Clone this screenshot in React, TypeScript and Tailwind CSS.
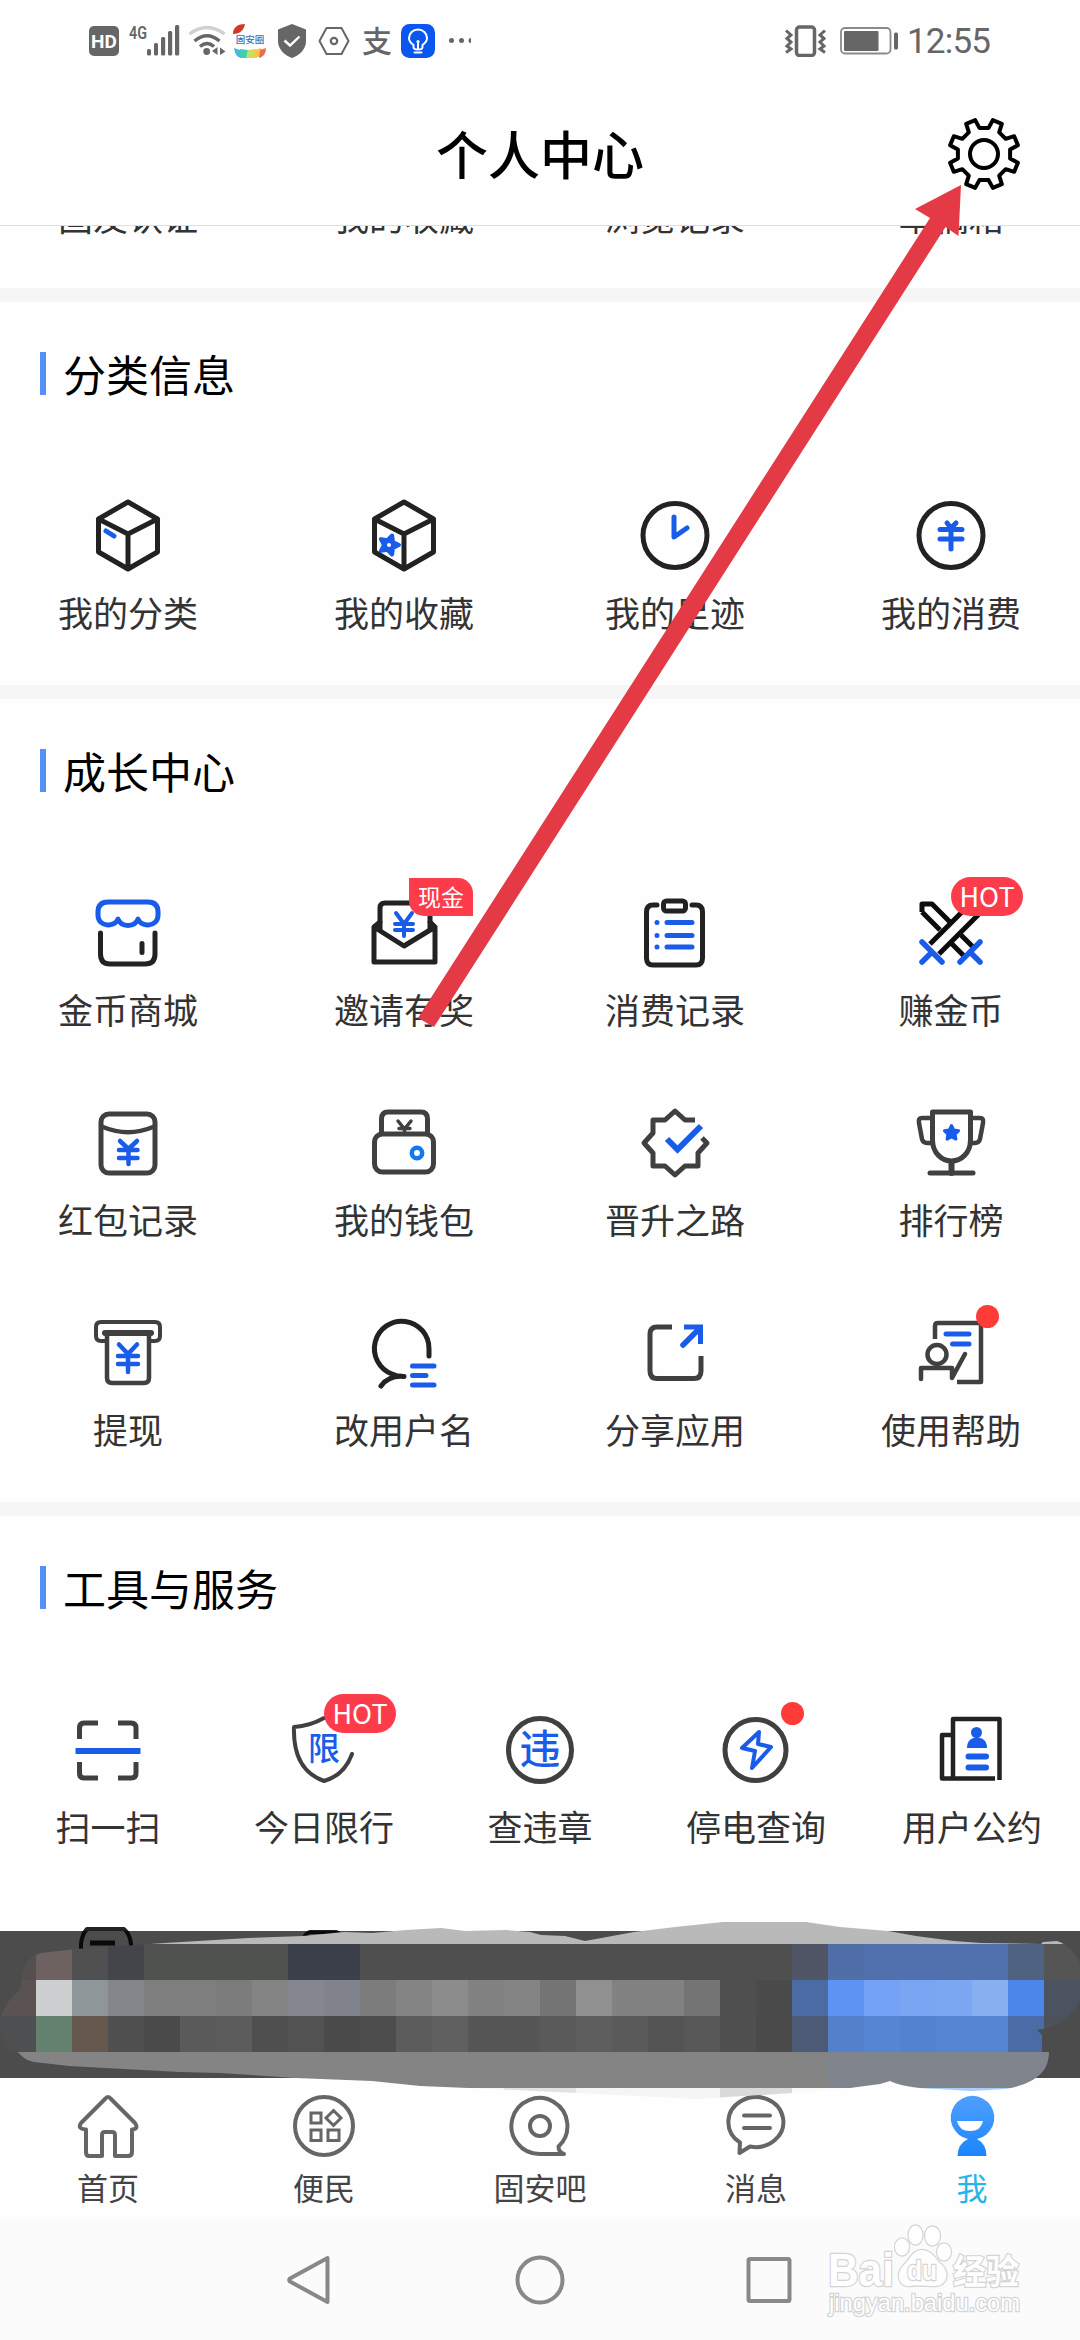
import type { ReactNode } from "react";

const INK = "#222222";
const GRAY = "#404040";
const BLUE = "#1a5cea";
const STATUS = "#666666";

type Item = {
    label: string;
    icon: ReactNode;
    badge?: "hot" | "cash" | "dot";
};

/* Every icon is drawn around its own centre */
function Icon({ color = INK, width = 5, children }: { color?: string; width?: number; children: ReactNode }) {
    return (
        <svg
            viewBox="-40 -40 80 80"
            className="block h-20 w-20 overflow-visible"
            fill="none"
            stroke={color}
            strokeWidth={width}
            strokeLinecap="round"
            strokeLinejoin="round"
        >
            {children}
        </svg>
    );
}

function star(cx: number, cy: number, r: number, turn: number) {
    return Array.from({ length: 10 }, (_, i) => {
        const a = ((turn + i * 36) * Math.PI) / 180;
        const len = i % 2 ? r * 0.5 : r;
        return `${(cx + len * Math.cos(a)).toFixed(1)},${(cy + len * Math.sin(a)).toFixed(1)}`;
    }).join(" ");
}

const gearPoints = Array.from({ length: 8 }, (_, k) =>
    [
        [-10, 26.5],
        [10, 26.5],
        [14.5, 35],
        [30.5, 35],
    ].map(([deg, r]) => {
        const a = ((k * 45 + deg) * Math.PI) / 180;
        return `${(r * Math.sin(a)).toFixed(1)},${(-r * Math.cos(a)).toFixed(1)}`;
    })
)
    .flat()
    .join(" ");

const cube = <path d="M0 -34L29.5 -17V16L0 33L-29.5 16V-17ZM-29.5 -17L0 -2L29.5 -17M0 -2V33" />;

const infoItems: Item[] = [
    {
        label: "我的分类",
        icon: (
            <Icon>
                {cube}
                <path d="M-22 -5L-14 0" stroke={BLUE} />
            </Icon>
        ),
    },
    {
        label: "我的收藏",
        icon: (
            <Icon>
                {cube}
                <polygon points={star(-15, 9, 10, 0)} fill={BLUE} stroke={BLUE} strokeWidth={4} />
                <circle cx={-15} cy={9} r={2} fill="#fff" stroke="none" />
            </Icon>
        ),
    },
    {
        label: "我的足迹",
        icon: (
            <Icon>
                <circle r={32} cy={-0.5} />
                <path d="M-1 -19V1L12 -8" stroke={BLUE} />
            </Icon>
        ),
    },
    {
        label: "我的消费",
        icon: (
            <Icon>
                <circle r={32} cy={-0.5} />
                <path d="M-4 -13L0 -8L5 -13M-11 -6.5H11M-11 3H11M0 -8V13" stroke={BLUE} />
            </Icon>
        ),
    },
];

const growItems: Item[] = [
    {
        label: "金币商城",
        icon: (
            <Icon>
                <path
                    d="M-10 -14C-13 -5.5 -30 -5.5 -30 -18V-21Q-30 -31 -20 -31H20Q30 -31 30 -21V-18C30 -5.5 13 -5.5 10 -14C7 -5.5 -7 -5.5 -10 -14Z"
                    stroke={BLUE}
                />
                <path d="M-27.5 0V21Q-27.5 31 -18 31H17Q27 31 27 21V0M14 10.5V19.5" />
            </Icon>
        ),
    },
    {
        label: "邀请有奖",
        badge: "cash",
        icon: (
            <Icon>
                <path d="M-30 -6V29H31V-6L0 13ZM-30 -6L-24 -11M31 -6L26 -11" />
                <path d="M-24 -4V-25Q-24 -30 -19 -30H21Q26 -30 26 -25V-4" />
                <path d="M-8 -20L0 -9L8 -20M-9 -9H9M-9 -3H9M0 -9V3" stroke={BLUE} strokeWidth={4} />
            </Icon>
        ),
    },
    {
        label: "消费记录",
        icon: (
            <Icon>
                <path
                    d="M-18 -28H-22Q-28.5 -28 -28.5 -21V25Q-28.5 32 -22 32H21Q27.5 32 27.5 25V-21Q27.5 -28 21 -28H17"
                />
                <rect x={-11.5} y={-32} width={22} height={10} rx={3} />
                <path d="M-18 -10.5H-18M-18 2.5H-18M-18 14H-18M-8 -10.5H17M-8 2.5H17M-8 14H17" stroke={BLUE} />
            </Icon>
        ),
    },
    {
        label: "赚金币",
        badge: "hot",
        icon: (
            <Icon color="#0c0c0c">
                <path d="M-29 -21V-29H-19L-1 -11M-29 -21L-11 -3M10 2L23 15M0 10L13 23" strokeLinecap="butt" />
                <path d="M-21 11L19 -29H29V-20L-12 21" strokeLinecap="butt" />
                <path d="M-29 9L-9 29M-29 29L-19 19M29 9L9 29M29 29L19 19" stroke={BLUE} strokeWidth={5.5} />
            </Icon>
        ),
    },
    {
        label: "红包记录",
        icon: (
            <Icon color={GRAY}>
                <rect x={-27} y={-29} width={54} height={59} rx={8} />
                <path d="M-25 -16Q0 -5.5 25 -16" strokeWidth={4.5} />
                <path d="M-8 -2L0.5 6L9 -2M-9 7H9.5M-9 15H9.5M0.5 6V21" stroke={BLUE} strokeWidth={4.5} />
            </Icon>
        ),
    },
    {
        label: "我的钱包",
        icon: (
            <Icon color={GRAY}>
                <rect x={-29.5} y={-9} width={59} height={38} rx={8} />
                <path d="M-22.5 -10V-24Q-22.5 -31 -16 -31H17Q23.5 -31 23.5 -24V-10" />
                <path d="M-6 -22L0.5 -14L7 -22M-5 -14.5H6M0.5 -14V-10" strokeWidth={3.5} />
                <circle cx={13} cy={10} r={5.2} stroke="#1378ec" strokeWidth={4.5} />
            </Icon>
        ),
    },
    {
        label: "晋升之路",
        icon: (
            <Icon color={GRAY}>
                <path
                    d="M20 -23H10L0 -32L-10 -23H-22V-10L-31 0L-22 10V23H-10L0 32L10 23H23V10L32 0L27 -5"
                    strokeLinecap="butt"
                />
                <path d="M-8 -4L2.5 6.5L26 -17" stroke={BLUE} strokeWidth={6} strokeLinecap="butt" strokeLinejoin="miter" />
            </Icon>
        ),
    },
    {
        label: "排行榜",
        icon: (
            <Icon color={GRAY}>
                <path d="M-18.5 -31H19.5V-3C19.5 10 10 18 0.5 18C-9 18 -18.5 10 -18.5 -3Z" />
                <path d="M-19 -25H-29Q-33 -25 -32 -20L-29 -4Q-28 0 -24 0H-18M20 -25H29Q33 -25 32 -20L29 -4Q28 0 24 0H19" strokeWidth={4.5} />
                <path d="M0.5 19V30" strokeWidth={6} />
                <path d="M-21 30H22" />
                <polygon points={star(0.5, -10, 7.5, -90)} fill={BLUE} stroke={BLUE} strokeWidth={3} />
            </Icon>
        ),
    },
    {
        label: "提现",
        icon: (
            <Icon color={GRAY} width={4.5}>
                <path d="M-23 -12H-27Q-32 -12 -32 -17V-26Q-32 -31 -27 -31H27Q32 -31 32 -26V-17Q32 -12 27 -12H23" strokeWidth={4} />
                <path d="M-23 -20H23" strokeWidth={6} />
                <path d="M-21 -18V25Q-21 30 -16 30H16Q21 30 21 25V-18" />
                <path d="M-9 -8.5L0 1L9 -8.5M-10 3H10M-10 11H10M0 1V19" stroke={BLUE} strokeWidth={4.5} />
            </Icon>
        ),
    },
    {
        label: "改用户名",
        icon: (
            <Icon>
                <path d="M25 3V-4A27.3 27.3 0 1 0 -12 21Q-6 24 0 23.5M-23 33Q-15 22 0 23.5" />
                <path d="M8.5 13H30M8.5 22.5H22M8.5 32H30" stroke={BLUE} strokeWidth={5} />
            </Icon>
        ),
    },
    {
        label: "分享应用",
        icon: (
            <Icon color={GRAY}>
                <path d="M-3 -26H-18Q-25 -26 -25 -19V18Q-25 25.5 -18 25.5H19Q26 25.5 26 18V3" strokeLinecap="butt" />
                <path d="M8 -8L25 -25" stroke={BLUE} strokeWidth={5.5} />
                <path d="M9 -26H25.5V-9" stroke={BLUE} strokeLinecap="butt" strokeLinejoin="miter" />
            </Icon>
        ),
    },
    {
        label: "使用帮助",
        badge: "dot",
        icon: (
            <Icon color={GRAY} width={4.5}>
                <path d="M-16 -14V-27Q-16 -30 -13 -30H30V29H6" strokeLinecap="butt" />
                <circle cx={-14} cy={1.5} r={9.5} />
                <path d="M-30 26V15H1V25L14 1" />
                <path d="M-5 -19H18M1.5 -9H18" stroke={BLUE} strokeWidth={5} />
            </Icon>
        ),
    },
];

const toolItems: Item[] = [
    {
        label: "扫一扫",
        icon: (
            <Icon color={GRAY}>
                <path
                    d="M-28.5 -11V-22Q-28.5 -27 -24 -27H-10M10 -27H23Q28 -27 28 -22V-11M-28.5 12V23Q-28.5 28 -24 28H-10M10 28H23Q28 28 28 23V12"
                    strokeLinecap="butt"
                />
                <path d="M-32.5 1H32.5" stroke={BLUE} strokeWidth={6} strokeLinecap="butt" />
            </Icon>
        ),
    },
    {
        label: "今日限行",
        badge: "hot",
        icon: (
            <Icon color={GRAY} width={4}>
                <path d="M28 4C23 18 14 27 0 31C-20 24 -31 6 -30 -23Q-14 -24 0 -32" />
                <text
                    x={0}
                    y={10}
                    textAnchor="middle"
                    fontSize={32}
                    stroke="none"
                    fill={BLUE}
                    className="font-['Noto_Sans_CJK_SC',sans-serif] font-medium"
                >
                    限
                </text>
            </Icon>
        ),
    },
    {
        label: "查违章",
        icon: (
            <Icon color={GRAY}>
                <circle r={31.5} />
                <text
                    x={0}
                    y={14}
                    textAnchor="middle"
                    fontSize={41}
                    stroke="none"
                    fill={BLUE}
                    className="font-['Noto_Sans_CJK_SC',sans-serif] font-medium"
                >
                    违
                </text>
            </Icon>
        ),
    },
    {
        label: "停电查询",
        badge: "dot",
        icon: (
            <Icon color={GRAY}>
                <circle r={30.5} cx={-0.5} />
                <path d="M3 -18L-14 -2L-1 1L-4 18L15 -3L2 -6Z" stroke={BLUE} strokeWidth={4} />
            </Icon>
        ),
    },
    {
        label: "用户公约",
        icon: (
            <Icon width={4.5}>
                <path d="M27.5 30V-31H-19V28M-19 -15H-30V28.5H23" strokeLinecap="butt" />
                <circle cx={4.5} cy={-17.5} r={5.5} fill={BLUE} stroke="none" />
                <path d="M-5 -2C-5 -9 -1 -12.5 5 -12.5S15 -9 15 -2Z" fill={BLUE} stroke="none" />
                <path d="M-3.5 6.5H14M-3.5 17.5H14" stroke={BLUE} strokeWidth={6} />
            </Icon>
        ),
    },
    {
        label: "",
        icon: (
            <Icon width={4}>
                <path d="M-27 0V-16Q-26 -26 -21 -31H16Q22 -26 23 -16V0" />
                <path d="M-18 -17H7" strokeWidth={5} strokeLinecap="butt" />
            </Icon>
        ),
    },
    {
        label: "",
        icon: (
            <Icon width={4}>
                <path d="M-20 -22Q-18 -27 -14 -28H12Q16 -27 18 -22" />
            </Icon>
        ),
    },
];

function Badge({ kind }: { kind: Item["badge"] }) {
    if (kind === "hot") {
        return (
            <span className="absolute -top-4 left-10 flex h-[39px] w-[72px] items-center justify-center rounded-full bg-[#fd3c4b] pb-0.5 text-[27px] leading-none text-white">
                HOT
            </span>
        );
    }
    if (kind === "cash") {
        return (
            <span className="absolute -top-[15px] left-[45px] flex h-[38px] w-16 items-center justify-center rounded-tr-[15px] rounded-bl-[15px] bg-[#fd3c4b] pb-0.5 text-[23px] leading-none text-white">
                现金
            </span>
        );
    }
    if (kind === "dot") {
        return <span className="absolute -top-2 left-[65px] h-[23px] w-[23px] rounded-full bg-[#ff3b37]" />;
    }
    return null;
}

function Cell({ item }: { item: Item }) {
    return (
        <div className="flex h-[138px] w-[200px] flex-col items-center">
            <div className="relative h-20 w-20">
                {item.icon}
                <Badge kind={item.badge} />
            </div>
            <span className="mt-4 text-[35px] leading-[40px] whitespace-nowrap text-[#333]">{item.label}</span>
        </div>
    );
}

function Section({ title, items, wide, className }: { title: string; items: Item[]; wide?: boolean; className: string }) {
    return (
        <section className={`bg-[#fefefe] pt-[50px] ${className}`}>
            <div className="flex h-[43px] items-center pl-10">
                <span className="h-[43px] w-1.5 bg-[#5590f6]" />
                <h2 className="ml-[17px] text-[43px] leading-[43px] text-black">{title}</h2>
            </div>
            <div
                className={
                    wide
                        ? "mt-[101px] grid grid-cols-5 justify-items-center gap-y-[72px]"
                        : "mt-[101px] grid grid-cols-[276px_271px_276px_200px] gap-y-[72px] pl-7"
                }
            >
                {items.map((item, i) => (
                    <Cell key={i} item={item} />
                ))}
            </div>
        </section>
    );
}

function StatusBar() {
    return (
        <div className="flex h-[82px] items-center pr-[89px] pl-[89px] font-[Roboto,sans-serif] text-[#666]">
            <span className="flex h-[30px] w-[30px] items-center justify-center rounded-[5px] bg-[#666] text-[19px] leading-none font-bold text-[#fefefe]">
                HD
            </span>
            <svg viewBox="129 24 52 34" className="ml-2.5 h-[34px] w-[52px] overflow-visible" fill={STATUS}>
                <text x={129} y={38.5} fontSize={18} textLength={18} lengthAdjust="spacingAndGlyphs" fontWeight={600}>
                    4G
                </text>
                <rect x={147} y={49} width={4} height={6.5} rx={1.5} />
                <rect x={154} y={43} width={4} height={12.5} rx={1.5} />
                <rect x={161} y={37} width={4.2} height={18.5} rx={1.5} />
                <rect x={168} y={31} width={4.2} height={24.5} rx={1.5} />
                <rect x={175} y={25} width={4.2} height={30.5} rx={1.5} />
            </svg>
            <svg viewBox="188 24 38 34" className="ml-[7px] h-[34px] w-[38px]" fill="none" stroke={STATUS} strokeWidth={3.4}>
                <path d="M189.5 34Q207 21 224.5 34" stroke="#d0d0d0" />
                <path d="M194.5 41Q207 30.5 219.5 41M200 46.5Q207 40.5 214 46.5" />
                <circle cx={206.7} cy={51.5} r={3.4} fill={STATUS} stroke="none" />
                <path d="M212 51L217.5 47V55ZM220 47.5L225.5 51.5L220 55Z" fill={STATUS} stroke="none" />
            </svg>
            <svg viewBox="232 23 36 36" className="ml-1.5 h-9 w-9 overflow-visible">
                <path d="M233 34C233 27 238 24 245 24C244 30 240 34 233 34Z" fill="#cf3a24" />
                <text x={250} y={43} textAnchor="middle" fontSize={9.5} fontWeight={500} fill="#2f73b5" className="font-['Noto_Sans_CJK_SC',sans-serif]">
                    固安圈
                </text>
                <path d="M234 48L243 51L241 58Q235 57 234 48Z" fill="#4bb7d6" />
                <path d="M240 49L248 50L247 58H240Z" fill="#3fcfb0" />
                <path d="M248 50L256 49L257 58H246Z" fill="#c5df62" />
                <path d="M254 50L261 48L262 57H254Z" fill="#f4c64e" />
                <path d="M260 50L266 48Q266 56 259 58Z" fill="#ee6c4e" />
            </svg>
            <svg viewBox="277 24 30 34" className="ml-[9px] h-[34px] w-[30px]">
                <path d="M292 24L306 29.5V41C306 49 300 55 292 58C284 55 278 49 278 41V29.5Z" fill={STATUS} />
                <path d="M284.5 40.5L290 45.5L299.5 36.5" fill="none" stroke="#fff" strokeWidth={2.4} />
            </svg>
            <svg viewBox="318 25 32 32" className="ml-[11px] h-8 w-8" fill="none" stroke={STATUS} strokeWidth={2}>
                <path d="M326.5 28H341.5L348.5 41L341.5 54H326.5L319.5 41Z" strokeLinejoin="round" />
                <circle cx={334} cy={41} r={3.2} strokeWidth={2.2} />
            </svg>
            <span className="ml-[11px] w-8 pb-1 text-center font-['Noto_Sans_CJK_SC',sans-serif] text-[30px] leading-8 font-medium">支</span>
            <svg viewBox="401 24 34 34" className="ml-2 h-[34px] w-[34px]" fill="none" stroke="#fff" strokeWidth={2} strokeLinecap="round">
                <rect x={401} y={24} width={34} height={34} rx={8.5} fill="#0a57f0" stroke="none" />
                <path d="M413.5 47V45Q409 42 409 38A9 8.5 0 0 1 427 38Q427 42 422.5 45V47Q422.5 49.5 418 49.5T413.5 47ZM414.5 52.5H421.5M418 48V42" />
                <circle cx={418} cy={41.5} r={1.6} fill="#fff" stroke="none" />
            </svg>
            <svg viewBox="448 36 23 10" className="ml-[13px] h-2.5 w-[23px]" fill={STATUS}>
                <circle cx={451.5} cy={40.5} r={2.5} />
                <circle cx={461.5} cy={40.5} r={2.5} />
                <circle cx={471} cy={40.5} r={2.5} />
            </svg>
            <svg viewBox="784 24 42 32" className="ml-auto h-8 w-[42px]" fill="none" stroke={STATUS} strokeWidth={3.5}>
                <rect x={796.5} y={26} width={18} height={28.5} rx={3} />
                <path d="M786 29.5L791 34L787 37.5L791 41L787 45L791 48L786 51.5M825 29.5L820 34L824 37.5L820 41L824 45L820 48L825 51.5" strokeWidth={3} />
            </svg>
            <svg viewBox="840 26 60 30" className="ml-3.5 h-[30px] w-[60px]" fill={STATUS}>
                <rect x={841} y={28} width={49.5} height={25.5} rx={4} fill="none" stroke="#8a8a8a" strokeWidth={1.8} />
                <rect x={844} y={31} width={34.5} height={20} rx={1} />
                <rect x={894} y={32.5} width={4} height={17} rx={1.5} />
            </svg>
            <span className="ml-[7px] w-[84px] text-[35px] leading-none tracking-[-0.8px]">12:55</span>
        </div>
    );
}

const MOSAIC: { y: number; cells: [string, number][] }[] = [
    { y: 1908, cells: [["#b9b9b9", 30]] },
    {
        y: 1944,
        cells: [
            ["#545050", 1], ["#6e6260", 1], ["#505050", 1], ["#43454b", 1], ["#505250", 4], ["#3b404a", 2],
            ["#4f4f4f", 12], ["#505666", 1], ["#506fa8", 1], ["#5070ae", 4], ["#506282", 1], ["#555555", 1],
        ],
    },
    {
        y: 1980,
        cells: [
            ["#5a5351", 1], ["#cdcecf", 1], ["#8f9699", 1], ["#84868c", 1], ["#7e7e7e", 2], ["#7c7c7c", 1], ["#848484", 1],
            ["#86878e", 1], ["#80828c", 1], ["#7c7c7c", 1], ["#848484", 1], ["#8c8c8c", 1], ["#828282", 1], ["#848484", 1],
            ["#747474", 1], ["#909090", 1], ["#828282", 2], ["#747474", 1], ["#4e4e4e", 1], ["#4b4b4b", 1], ["#4a6ba4", 1],
            ["#5d93f2", 1], ["#74a2f4", 1], ["#78a6f3", 1], ["#7ca8f3", 1], ["#86b0f0", 1], ["#4d86ea", 1], ["#4b5260", 1],
        ],
    },
    {
        y: 2016,
        cells: [
            ["#4d4f50", 1], ["#64806f", 1], ["#66584e", 1], ["#4f4f4f", 1], ["#4a4a4a", 1], ["#5a5a5a", 1], ["#5c5c5c", 1],
            ["#4f4f4f", 1], ["#525252", 1], ["#4b4b4b", 1], ["#4d4d4d", 1], ["#5c5c5c", 1], ["#606060", 1], ["#565656", 2],
            ["#5a5a5a", 1], ["#5e5e5e", 1], ["#5a5a5a", 1], ["#545454", 1], ["#585858", 1], ["#4f4f4f", 1], ["#4a4a4a", 1],
            ["#4c5a76", 1], ["#5380cb", 1], ["#5685d2", 1], ["#5282d0", 1], ["#5685d2", 2], ["#4a6ba6", 1], ["#4d5259", 1],
        ],
    },
    { y: 2052, cells: [["#848484", 23], ["#80858d", 7]] },
    { y: 2088, cells: [["#f6f6f6", 14], ["#e2e2e2", 2], ["#f5f5f5", 4], ["#dadada", 2], ["#fafafa", 3], ["#a9cdfa", 5]] },
];

function Smudge() {
    return (
        <svg viewBox="0 1908 1080 192" className="absolute top-[1908px] left-0 h-[192px] w-[1080px]">
            <clipPath id="smudge">
                <path d="M165 1943L76 1949L41 1953Q31 1956 28 1961L22 1972L21 1988L7 2003L0 2017V2030L8 2047L19 2053Q24 2060 34 2062L69 2066L179 2072L220 2073L296 2078L372 2081L420 2086L468 2088L578 2093L696 2099L792 2093L850 2088L880 2084L890 2081Q905 2088 937 2089L971 2091L1006 2089Q1034 2084 1044 2070Q1049 2062 1049 2052H1042V2035L1037 2030Q1052 2028 1062 2021Q1074 2012 1080 2000V1963Q1071 1945 1057 1941L1043 1942L1041 1944L981 1943L954 1941L916 1936L888 1931L840 1927L806 1922H723L675 1927L634 1932L585 1941L565 1936L541 1935L530 1932L506 1930L465 1931L441 1928L406 1930L372 1933L344 1932L303 1936L248 1938Z" />
            </clipPath>
            <g clipPath="url(#smudge)" shapeRendering="crispEdges">
                {MOSAIC.map((row) => {
                    let col = 0;
                    return row.cells.map(([fill, span]) => {
                        const x = col * 36;
                        col += span;
                        return <rect key={`${row.y}-${x}`} x={x} y={row.y} width={span * 36} height={36} fill={fill} />;
                    });
                })}
            </g>
        </svg>
    );
}

const tabs = [
    {
        label: "首页",
        icon: (
            <Icon color={STATUS} width={4}>
                <path d="M-3 -27Q0 -31 3 -27L27 -3Q31 3 24 3.5V26Q24 30 20 30H7V9Q7 6 4 6H-3Q-6 6 -6 9V30H-19Q-22 30 -22 26V3.5Q-31 3 -27 -3Z" />
            </Icon>
        ),
    },
    {
        label: "便民",
        icon: (
            <Icon color={STATUS} width={4}>
                <circle r={29} />
                <path d="M-13 -13H-3V-3H-13ZM-13 4H-3V14.5H-13ZM4 4H15V14.5H4ZM9.5 -15.5L17 -8L9.5 -0.5L2 -8Z" strokeWidth={3} strokeLinejoin="miter" />
            </Icon>
        ),
    },
    {
        label: "固安吧",
        icon: (
            <Icon color={STATUS} width={4}>
                <path d="M18.5 20.5A28 28 0 1 0 0 28H24Q18.5 26 18.5 20.5Z" />
                <circle r={10} strokeWidth={4} />
            </Icon>
        ),
    },
    {
        label: "消息",
        icon: (
            <Icon color={STATUS} width={4}>
                <path d="M-16 16.5A27.5 25 0 1 1 -6 20.5L-16.5 27Z" />
                <path d="M-12 -10.5H14M-12 2H14" strokeWidth={4} />
            </Icon>
        ),
    },
    {
        label: "我",
        icon: (
            <Icon>
                <linearGradient id="me" x1="0" y1="0" x2="0" y2="1">
                    <stop offset="0" stopColor="#4f9ffc" />
                    <stop offset="1" stopColor="#1b85fe" />
                </linearGradient>
                <path
                    d="M-4 13A21.8 21.8 0 1 1 5 13Q14.5 18 14.5 30H-14.5Q-14.5 18 -4 13Z"
                    fill="url(#me)"
                    stroke="none"
                />
                <path d="M-15 -5H11Q9 5 -2 5T-15 -5Z" fill="#fff" stroke="none" />
            </Icon>
        ),
    },
];

function TabBar() {
    return (
        <nav className="grid h-[142px] grid-cols-5 bg-[#fefefe] pt-2">
            {tabs.map((tab) => (
                <div key={tab.label} className="flex flex-col items-center">
                    {tab.icon}
                    <span
                        className={
                            tab.label === "我"
                                ? "mt-px text-[31px] leading-[40px] text-[#25b5ea]"
                                : "mt-px text-[31px] leading-[40px] text-[#444]"
                        }
                    >
                        {tab.label}
                    </span>
                </div>
            ))}
        </nav>
    );
}

function Watermark() {
    return (
        <svg
            viewBox="820 2220 210 104"
            className="absolute top-[2220px] left-[820px] h-[104px] w-[210px] font-['Liberation_Sans','Noto_Sans_CJK_SC',sans-serif]"
            fill="#fefefe"
            stroke="#d4d4d4"
            strokeWidth={2.4}
            paintOrder="stroke"
        >
            <text x={828} y={2286} fontSize={46} fontWeight={700} textLength={66} lengthAdjust="spacingAndGlyphs">
                Bai
            </text>
            <ellipse cx={902} cy={2247} rx={7} ry={8.5} />
            <ellipse cx={915.5} cy={2235} rx={7} ry={9.5} />
            <ellipse cx={932.5} cy={2236} rx={7.5} ry={9.5} />
            <ellipse cx={944} cy={2252} rx={7} ry={8.5} />
            <path d="M922 2250C932 2250 935 2259 942 2265C950 2273 947 2286 935 2286C928 2286 916 2285 910 2286C898 2287 896 2273 903 2266C911 2259 912 2250 922 2250Z" />
            <text x={922} y={2280} fontSize={28} fontWeight={700} textAnchor="middle" textLength={30} lengthAdjust="spacingAndGlyphs">
                du
            </text>
            <text x={953} y={2284} fontSize={34} fontWeight={700} textLength={66} lengthAdjust="spacingAndGlyphs">
                经验
            </text>
            <text x={829} y={2311} fontSize={24} textLength={191} lengthAdjust="spacingAndGlyphs">
                jingyan.baidu.com
            </text>
        </svg>
    );
}

export default function App() {
    return (
        <div className="relative h-[2340px] w-[1080px] overflow-hidden bg-[#fefefe] font-['Noto_Sans_CJK_SC',sans-serif]">
            <StatusBar />

            {/* Title bar */}
            <header className="flex h-36 items-center border-b border-[#dedede] px-14">
                <div className="w-20" />
                <h1 className="flex-1 pb-0.5 text-center text-[52px] leading-none font-medium text-black">个人中心</h1>
                <Icon color="#000" width={4}>
                    <polygon points={gearPoints} />
                    <circle r={14} />
                </Icon>
            </header>

            {/* Row scrolled under the title bar */}
            <div className="h-[62px] overflow-hidden">
                <div className="-mt-[30px] grid grid-cols-[276px_271px_276px_200px] pl-7 text-center text-[35px] leading-[40px] text-[#333]">
                    {["固友认证", "我的收藏", "浏览记录", "草稿箱"].map((label) => (
                        <span key={label} className="w-[200px]">
                            {label}
                        </span>
                    ))}
                </div>
            </div>

            <div className="h-3.5 bg-[#f6f6f6]" />
            <Section title="分类信息" items={infoItems} className="h-[383px]" />
            <div className="h-3.5 bg-[#f6f6f6]" />
            <Section title="成长中心" items={growItems} className="h-[803px]" />
            <div className="h-3.5 bg-[#f6f6f6]" />
            <Section title="工具与服务" items={toolItems} wide className="h-[562px] overflow-hidden" />

            <TabBar />

            {/* System navigation */}
            <div className="h-[120px] bg-[#fbfbfb]">
                <svg viewBox="0 0 1080 120" className="block h-[120px] w-[1080px]" fill="none" stroke="#888" strokeWidth={4}>
                    <path d="M327.5 38V82L290 61.5Q288.5 60 290 58.5Z" strokeLinejoin="round" />
                    <circle cx={540} cy={60} r={22.5} />
                    <rect x={748.5} y={39} width={41} height={42} rx={1.5} />
                </svg>
            </div>

            {/* Login banner, smeared out */}
            <div className="absolute top-[1931px] left-0 h-[147px] w-full bg-black/70" />
            <Smudge />

            <Watermark />

            <svg viewBox="0 0 1080 2340" className="pointer-events-none absolute inset-0 h-[2340px] w-[1080px]">
                <polygon points="961,185 915,209 930,218 418,1018 434,1027 945.5,227 958.5,236" fill="#e33a46" />
            </svg>
        </div>
    );
}
